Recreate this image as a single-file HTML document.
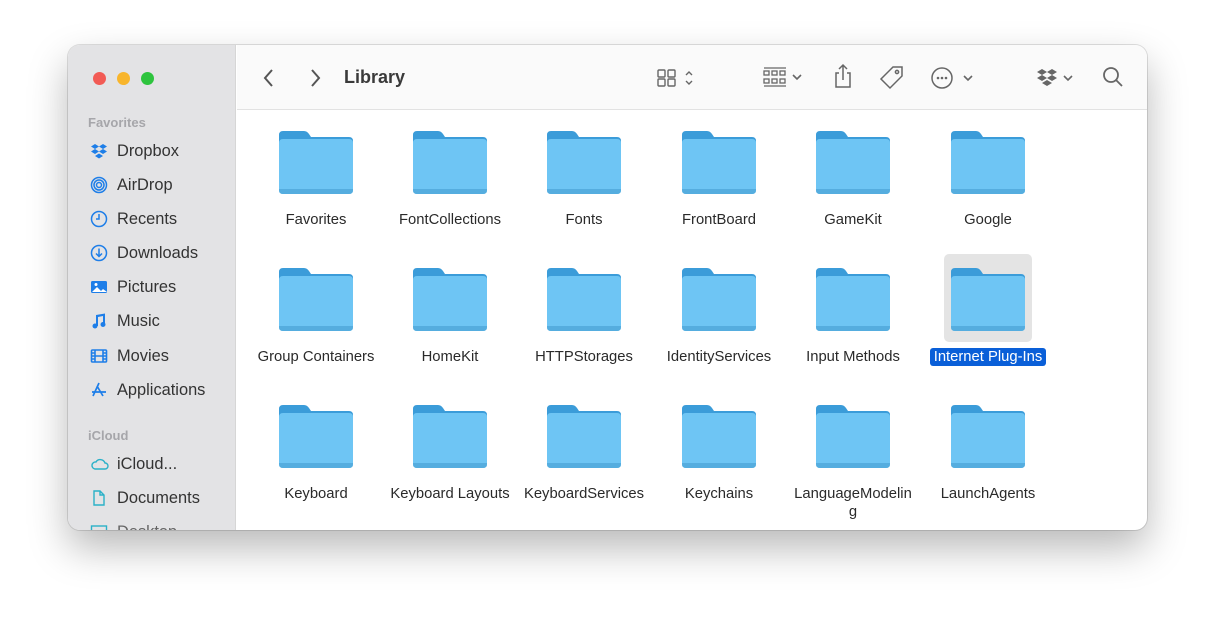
<!DOCTYPE html>
<html><head><style>
*{margin:0;padding:0;box-sizing:border-box}
body{width:1216px;height:621px;background:#fff;font-family:"Liberation Sans",sans-serif;position:relative;overflow:hidden}
.win{position:absolute;left:68px;top:45px;width:1079px;height:485px;border-radius:12px;overflow:hidden;background:#fff;box-shadow:0 18px 40px rgba(0,0,0,.28),0 0 0 1px rgba(0,0,0,.12)}
.side{position:absolute;left:0;top:0;width:168px;height:485px;background:#e3e3e5;border-right:1px solid #d6d6d6}
.dot{position:absolute;top:27px;width:13px;height:13px;border-radius:50%}
.hd{position:absolute;left:20px;font-size:13px;color:#a6a6aa;font-weight:bold}
.it{position:absolute;left:20px;font-size:16.4px;color:#333;height:20px;line-height:20px}
.it svg{position:absolute;left:2px;top:1px}
.it span{position:absolute;left:29px;white-space:nowrap}
.tb{position:absolute;left:169px;top:0;right:0;height:65px;background:#fafafa;border-bottom:1px solid #e2e2e2}
.f{position:absolute;width:134px;text-align:center}
.f svg{display:block;margin:0 auto}
.f div{font-size:14.8px;color:#2a2a2a;margin-top:17px;line-height:18px;margin-left:-10px;margin-right:-10px}
</style></head><body>
<div class="win">
<div class="side">
<div class="dot" style="left:25px;background:#f25b55"></div>
<div class="dot" style="left:49px;background:#f8b52c"></div>
<div class="dot" style="left:73px;background:#2ec43e"></div>
<div class="hd" style="top:70px">Favorites</div>
<div class="it" style="top:96px"><svg width="18" height="18" viewBox="0 0 18 18" fill="#1e7ee8"><path d="M5 2l4 2.5-4 2.5-4-2.5zM13 2l4 2.5-4 2.5-4-2.5zM5 7l4 2.5-4 2.5-4-2.5zM13 7l4 2.5-4 2.5-4-2.5zM9 11.5l4 2.5-4 2.5-4-2.5z"/></svg><span>Dropbox</span></div>
<div class="it" style="top:130px"><svg width="18" height="18" viewBox="0 0 18 18" fill="none" stroke="#1e7ee8" stroke-width="1.5"><circle cx="9" cy="9" r="7.5"/><circle cx="9" cy="9" r="5"/><circle cx="9" cy="9" r="2.5"/></svg><span>AirDrop</span></div>
<div class="it" style="top:164px"><svg width="18" height="18" viewBox="0 0 18 18" fill="none" stroke="#1e7ee8" stroke-width="1.5"><circle cx="9" cy="9" r="7.5"/><path d="M9 4v5H6"/></svg><span>Recents</span></div>
<div class="it" style="top:198px"><svg width="18" height="18" viewBox="0 0 18 18" fill="none" stroke="#1e7ee8" stroke-width="1.5"><circle cx="9" cy="9" r="7.5"/><path d="M9 4.5v8M6 9.5l3 3 3-3"/></svg><span>Downloads</span></div>
<div class="it" style="top:232px"><svg width="18" height="18" viewBox="0 0 18 18"><rect x="1" y="3" width="16" height="12" rx="1.5" fill="#1e7ee8"/><path d="M2 14l5-5 4 4 2-2 4 3z" fill="#fff"/><circle cx="6" cy="6.5" r="1.5" fill="#fff"/></svg><span>Pictures</span></div>
<div class="it" style="top:266px"><svg width="18" height="18" viewBox="0 0 18 18" fill="#1e7ee8"><path d="M6 3l9-1.5v11h-2V4L8 5v9H6z"/><circle cx="5" cy="14" r="2.5"/><circle cx="13" cy="12.5" r="2.5"/></svg><span>Music</span></div>
<div class="it" style="top:301px"><svg width="18" height="18" viewBox="0 0 18 18" fill="none" stroke="#1e7ee8" stroke-width="1.6"><rect x="1.5" y="3" width="15" height="12" rx="1"/><path d="M5 3v12M13 3v12M1.5 9h15M1.5 6h3.5M1.5 12h3.5M13 6h3.5M13 12h3.5"/></svg><span>Movies</span></div>
<div class="it" style="top:335px"><svg width="18" height="18" viewBox="0 0 18 18" fill="none" stroke="#1e7ee8" stroke-width="1.7"><path d="M9 2L3 15M7 5l6 10M2 11h14"/></svg><span>Applications</span></div>
<div class="hd" style="top:383px">iCloud</div>
<div class="it" style="top:409px"><svg width="20" height="18" viewBox="0 0 20 18" fill="none" stroke="#2bb1c8" stroke-width="1.4"><path d="M5 14h10a3 3 0 0 0 0-6 5 5 0 0 0-9-1 3.5 3.5 0 0 0-1 7z"/></svg><span>iCloud...</span></div>
<div class="it" style="top:443px"><svg width="18" height="18" viewBox="0 0 18 18" fill="none" stroke="#2bb1c8" stroke-width="1.4"><path d="M4 2h6l4 4v10H4zM10 2v4h4"/></svg><span>Documents</span></div>
<div class="it" style="top:477px"><svg width="18" height="18" viewBox="0 0 18 18" fill="none" stroke="#2bb1c8" stroke-width="1.4"><rect x="1.5" y="3" width="15" height="11"/></svg><span style="color:#666">Desktop</span></div>
</div>
<div class="tb">
<svg style="position:absolute;left:26px;top:24px" width="12" height="18" viewBox="0 0 12 18" fill="none" stroke="#555" stroke-width="2"><path d="M9 1L2 9l7 8"/></svg>
<svg style="position:absolute;left:72px;top:24px" width="12" height="18" viewBox="0 0 12 18" fill="none" stroke="#555" stroke-width="2"><path d="M3 1l7 8-7 8"/></svg>
<div style="position:absolute;left:107px;top:22px;font-size:18px;font-weight:bold;color:#3a3a3a">Library</div>
<svg style="position:absolute;left:420px;top:23px" width="40" height="20" viewBox="0 0 40 20" fill="none" stroke="#666" stroke-width="1.4"><rect x="1" y="2" width="7" height="7" rx="1"/><rect x="11" y="2" width="7" height="7" rx="1"/><rect x="1" y="11" width="7" height="7" rx="1"/><rect x="11" y="11" width="7" height="7" rx="1"/><path d="M29 7l3-3 3 3M29 13l3 3 3-3"/></svg>
<svg style="position:absolute;left:526px;top:21px" width="44" height="22" viewBox="0 0 44 22" fill="none" stroke="#666" stroke-width="1.3"><path d="M1 2h22M1 20h22"/><rect x="1" y="5" width="5" height="4"/><rect x="9" y="5" width="5" height="4"/><rect x="17" y="5" width="5" height="4"/><rect x="1" y="13" width="5" height="4"/><rect x="9" y="13" width="5" height="4"/><rect x="17" y="13" width="5" height="4"/><path d="M30 9l4 4 4-4" stroke-width="1.6"/></svg>
<svg style="position:absolute;left:595px;top:18px" width="22" height="26" viewBox="0 0 22 26" fill="none" stroke="#666" stroke-width="1.5"><path d="M7 10H4v14h14V10h-3M11 17V2M7 6l4-4 4 4"/></svg>
<svg style="position:absolute;left:642px;top:20px" width="26" height="26" viewBox="0 0 26 26" fill="none" stroke="#666" stroke-width="1.5"><path d="M14 2h9v9L11 23 2 14z"/><circle cx="18" cy="7" r="1.6"/></svg>
<svg style="position:absolute;left:694px;top:21px" width="44" height="24" viewBox="0 0 44 24" fill="none" stroke="#666" stroke-width="1.5"><circle cx="11" cy="12" r="10"/><path d="M33 10l4 4 4-4" stroke-width="1.6"/><g fill="#666" stroke="none"><circle cx="7" cy="12" r="1.3"/><circle cx="11" cy="12" r="1.3"/><circle cx="15" cy="12" r="1.3"/></g></svg>
<svg style="position:absolute;left:800px;top:23px" width="40" height="20" viewBox="0 0 40 20"><path fill="#666" d="M5 1l5 3-5 3-5-3zM15 1l5 3-5 3-5-3zM5 7l5 3-5 3-5-3zM15 7l5 3-5 3-5-3zM10 12l5 3-5 3-5-3z"/><path d="M27 8l4 4 4-4" fill="none" stroke="#666" stroke-width="1.6"/></svg>
<svg style="position:absolute;left:865px;top:21px" width="22" height="22" viewBox="0 0 22 22" fill="none" stroke="#666" stroke-width="1.8"><circle cx="9" cy="9" r="7"/><path d="M14 14l6 6"/></svg>
</div>
<div id="g" style="position:absolute;left:0;top:0"></div>
</div>
<script>
var names=[["Favorites","FontCollections","Fonts","FrontBoard","GameKit","Google"],["Group Containers","HomeKit","HTTPStorages","IdentityServices","Input Methods","Internet Plug-Ins"],["Keyboard","Keyboard Layouts","KeyboardServices","Keychains","LanguageModelin<br>g","LaunchAgents"]];
var cx=[248,382,516,651,785,920],h="";
var svg='<svg width="74" height="63" viewBox="0 0 74 63"><path d="M0 4Q0 0 4 0h21q3 0 5 3l2 3h38q4 0 4 4v8H0z" fill="#3b9cd9"/><path d="M0 12q0-4 4-4h66q4 0 4 4v47q0 4-4 4H4q-4 0-4-4z" fill="#6ec5f4"/><path d="M0 58v1q0 4 4 4h66q4 0 4-4v-1z" fill="#55addf"/></svg>';
for(var r=0;r<3;r++)for(var c=0;c<6;c++){var sel=(r==1&&c==5);
var t=86+r*137;
if(sel)h+='<div style="position:absolute;left:'+(cx[c]-44)+'px;top:'+(t-14)+'px;width:88px;height:88px;background:#e4e4e4;border-radius:5px"></div>';
h+='<div class="f" style="left:'+(cx[c]-67)+'px;top:'+t+'px">'+svg+'<div>'+(sel?'<span style="background:#0a5fd8;color:#fff;padding:1px 4px;border-radius:3px">'+names[r][c]+'</span>':names[r][c])+'</div></div>';}
document.getElementById('g').innerHTML=h;
</script>
</body></html>
